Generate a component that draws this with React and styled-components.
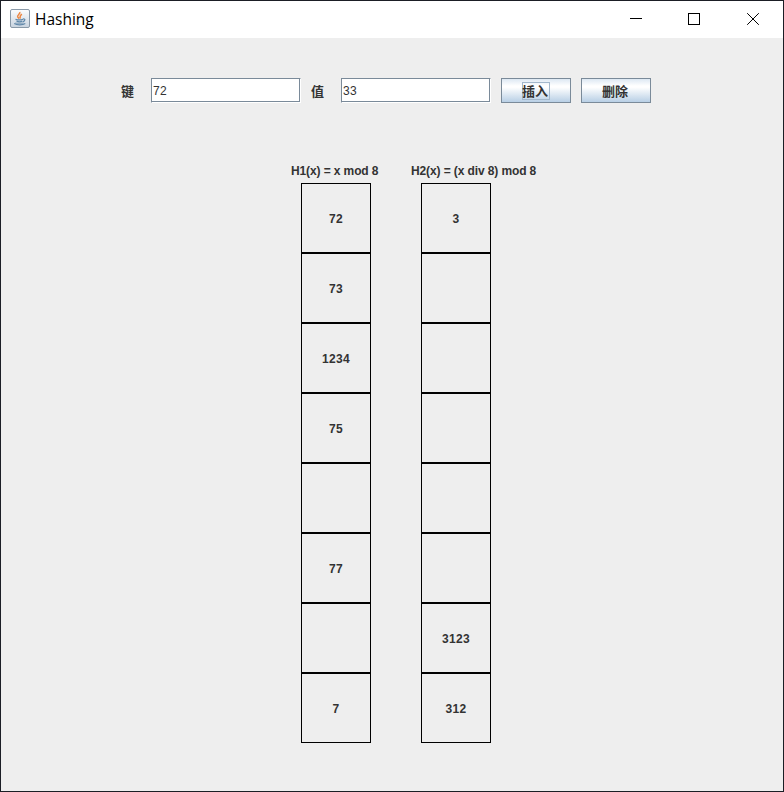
import React from "react";
import styled, { createGlobalStyle } from "styled-components";

const GlobalStyle = createGlobalStyle`
  * { box-sizing: border-box; }
  body { margin: 0; background: #1b1e25; }
`;

const Window = styled.main`
  width: 784px;
  height: 792px;
  border: 1px solid #1b1e25;
  background: #eeeeee;
  color: #333333;
  font: bold 12px/16px "Liberation Sans", "Noto Sans CJK SC", sans-serif;
  overflow: hidden;
`;

const TitleBar = styled.header`
  display: flex;
  height: 37px;
  background: #ffffff;
`;

const AppIcon = styled.svg`
  width: 20px;
  height: 20px;
  margin: 8px 0 0 9px;
  flex: none;
`;

const Title = styled.h1`
  flex: 1;
  margin: 0 0 0 5px;
  color: #000000;
  font: 400 15.5px/37px "Open Sans", "Noto Sans", sans-serif;
`;

const WindowControls = styled.div`
  display: flex;
  width: 174px;
`;

const ControlButton = styled.button`
  display: flex;
  justify-content: center;
  width: ${({ $width }) => $width}px;
  padding: 12px 0 0;
  border: 0;
  background: transparent;
  svg { width: 12px; height: 12px; display: block; }
`;

const Form = styled.form`
  display: flex;
  margin: 40px 0 0 120px;
  height: 25px;
`;

const Label = styled.label`
  width: ${({ $width }) => $width}px;
  font: 700 13px/25px "Noto Sans CJK SC", sans-serif;
`;

const Field = styled.input`
  width: 150px;
  height: 25px;
  margin-right: 10px;
  padding: 1px 1px 0;
  border: 1px solid #7a8a99;
  border-right-color: #ffffff;
  border-bottom-color: #ffffff;
  border-radius: 0;
  outline: 0;
  background: #ffffff;
  box-shadow: inset -1px -1px #7a8a99;
  color: #333333;
  font: 12px "Liberation Sans", sans-serif;
  letter-spacing: 0.33px;
`;

const ActionButton = styled.button`
  display: flex;
  align-items: center;
  justify-content: center;
  width: 70px;
  height: 25px;
  margin-right: 10px;
  padding: 0;
  border: 1px solid #7a8a99;
  background: linear-gradient(#dde8f3 0%, #ffffff 30%, #ffffff 36%, #b8cfe5 100%);
  color: #333333;
  font: 700 13px/17px "Noto Sans CJK SC", sans-serif;
`;

const ActionText = styled.span`
  width: 28px;
  height: 18px;
  border: 1px solid ${({ $focused }) => ($focused ? "#a3b8cc" : "transparent")};
  line-height: 15px;
  text-align: left;
  text-indent: -1px;
`;

const Tables = styled.section`
  display: flex;
  margin: 61px 0 0 290px;
`;

const TableColumn = styled.div`
  width: 120px;
`;

const Heading = styled.h2`
  margin: 0;
  height: 19px;
  font: inherit;
  line-height: 15px;
  letter-spacing: -0.11px;
  white-space: nowrap;
`;

const Bucket = styled.div`
  display: flex;
  align-items: center;
  justify-content: center;
  width: 70px;
  height: 70px;
  margin-left: 10px;
  border: 1px solid #000000;
  padding-top: 1px;
  letter-spacing: 0.33px;
`;

const tables = [
  { title: "H1(x) = x mod 8", values: ["72", "73", "1234", "75", "", "77", "", "7"] },
  { title: "H2(x) = (x div 8) mod 8", values: ["3", "", "", "", "", "", "3123", "312"] },
];

function JavaIcon() {
  return (
    <AppIcon viewBox="0 0 20 20" fill="none">
      <defs>
        <linearGradient id="iconSurface" x2="0" y2="1">
          <stop stopColor="#fbfcfd" />
          <stop offset="1" stopColor="#c8d3df" />
        </linearGradient>
      </defs>
      <rect x=".5" y=".5" width="19" height="18" rx="1.5" fill="url(#iconSurface)" stroke="#8999a8" />
      <path d="M9.8 3C10.8 5 6.4 6 7.8 8L9 9.6M12 5.3C8.7 6.8 11 7.8 9.8 9.5" stroke="#ee8640" strokeWidth="1.5" />
      <path d="M5.5 10.3C8 11 10.5 11 13 10.3M6.5 12.3C8.8 13 10.5 13 12.3 12.3M13 10C16 9.5 15 12.2 12.8 12.8M4.2 14.6C7 16.3 12.5 16.3 15.3 14.6" stroke="#5f87a9" strokeWidth="1.2" />
      <path d="M5 14.2H13.5" stroke="#7898b4" />
    </AppIcon>
  );
}

export default function App() {
  return (
    <>
      <GlobalStyle />
      <Window>
        <TitleBar>
          <JavaIcon />
          <Title>Hashing</Title>
          <WindowControls>
            <ControlButton $width={54} aria-label="Minimize">
              <svg viewBox="0 0 12 12"><path d="M0 5.5H12" stroke="#000" /></svg>
            </ControlButton>
            <ControlButton $width={62} aria-label="Maximize">
              <svg viewBox="0 0 12 12"><rect x=".5" y=".5" width="11" height="11" fill="none" stroke="#000" /></svg>
            </ControlButton>
            <ControlButton $width={56} aria-label="Close">
              <svg viewBox="0 0 12 12"><path d="M.2.2 11.8 11.8M11.8.2.2 11.8" stroke="#000" /></svg>
            </ControlButton>
          </WindowControls>
        </TitleBar>
        <Form onSubmit={(event) => event.preventDefault()}>
          <Label htmlFor="key" $width={30}>键</Label>
          <Field id="key" defaultValue="72" />
          <Label htmlFor="value" $width={30}>值</Label>
          <Field id="value" defaultValue="33" />
          <ActionButton><ActionText $focused>插入</ActionText></ActionButton>
          <ActionButton><ActionText>删除</ActionText></ActionButton>
        </Form>
        <Tables>
          {tables.map(({ title, values }) => (
            <TableColumn key={title}>
              <Heading>{title}</Heading>
              {values.map((value, index) => <Bucket key={index}>{value}</Bucket>)}
            </TableColumn>
          ))}
        </Tables>
      </Window>
    </>
  );
}
